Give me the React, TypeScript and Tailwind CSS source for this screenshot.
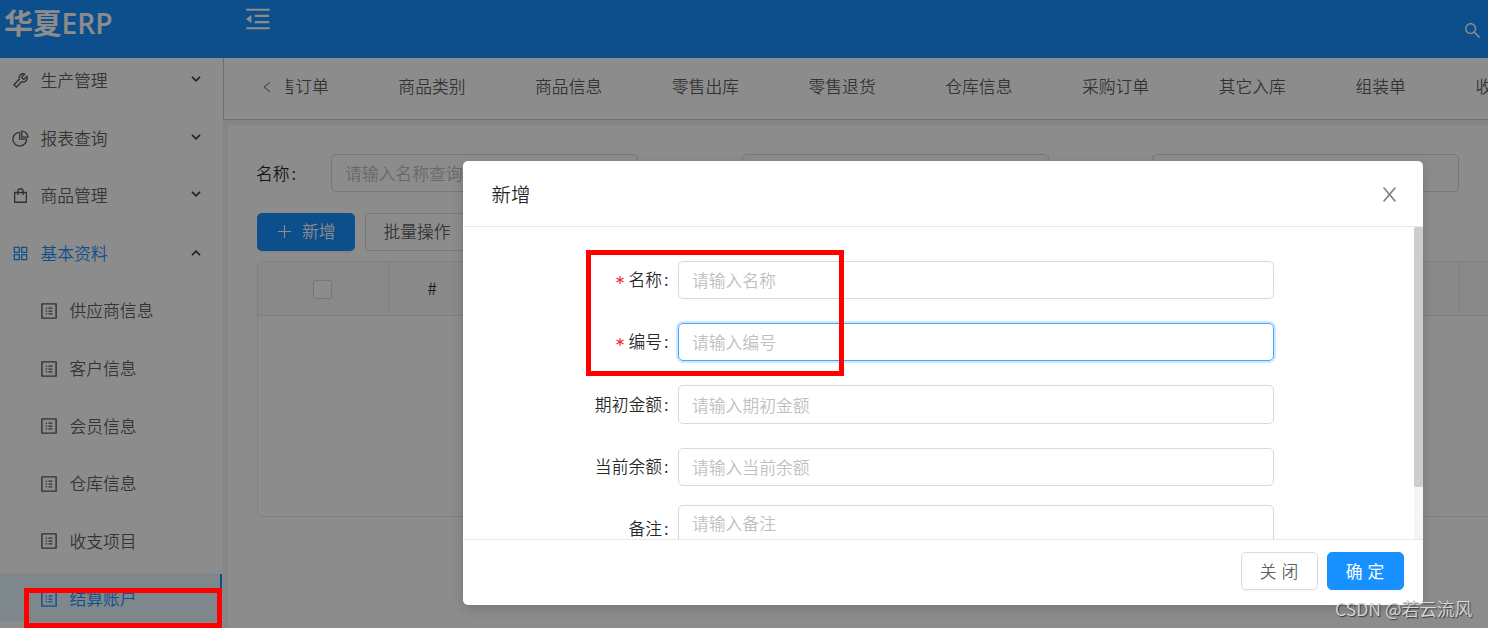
import type { ReactNode } from 'react';
import type { IconType } from 'react-icons';
import clsx from 'clsx';
import {
  AiOutlineAppstore,
  AiOutlineLeft,
  AiOutlineMenuFold,
  AiOutlinePieChart,
  AiOutlineProfile,
  AiOutlineSearch,
  AiOutlineShopping,
  AiOutlineTool,
} from 'react-icons/ai';

interface MenuGroup {
  label: string;
  icon: IconType;
  open?: boolean;
}

const menuGroups: MenuGroup[] = [
  { label: '生产管理', icon: AiOutlineTool },
  { label: '报表查询', icon: AiOutlinePieChart },
  { label: '商品管理', icon: AiOutlineShopping },
  { label: '基本资料', icon: AiOutlineAppstore, open: true },
];

const subMenu = ['供应商信息', '客户信息', '会员信息', '仓库信息', '收支项目', '结算账户'];
const activeItem = '结算账户';

const tabs = [
  '零售订单',
  '商品类别',
  '商品信息',
  '零售出库',
  '零售退货',
  '仓库信息',
  '采购订单',
  '其它入库',
  '组装单',
  '收款单',
];

const Header = () => (
  <header className="flex h-[58px] shrink-0 items-start bg-[#1890ff] text-white">
    <h1 className="w-[243px] pl-[4px] text-[28.8px] leading-[43px] font-bold">
      华夏<span className="font-['Open_Sans'] text-[28.2px] font-semibold">ERP</span>
    </h1>
    <AiOutlineMenuFold className="mt-[4px] size-[30px]" />
    <AiOutlineSearch className="mt-[21px] mr-[6px] ml-auto size-[19px]" />
  </header>
);

const Chevron = ({ up = false }: { up?: boolean }) => (
  <svg
    viewBox="0 0 10 6"
    className={clsx('h-[6px] w-[10px] fill-none stroke-black/75', up ? 'mt-[1px] rotate-180' : '-mt-[1px]')}
    strokeWidth="1.7"
  >
    <path d="M1 .8 5 4.8 9 .8" />
  </svg>
);

const CloseIcon = () => (
  <svg viewBox="64 64 896 896" className="mt-[2px] size-[19px] fill-black/50">
    <path d="M563.8 512l262.5-312.9c4.4-5.2.7-13.1-6.1-13.1h-79.8c-4.7 0-9.2 2.1-12.3 5.7L511.6 449.8 295.1 191.7c-3-3.6-7.5-5.7-12.3-5.7H203c-6.8 0-10.5 7.9-6.1 13.1L459.4 512 196.9 824.9A7.95 7.95 0 0 0 203 838h79.8c4.7 0 9.2-2.1 12.3-5.7l216.5-258.1 216.5 258.1c3 3.6 7.5 5.7 12.3 5.7h79.8c6.8 0 10.5-7.9 6.1-13.1L563.8 512z" />
  </svg>
);

const PlusIcon = () => (
  <svg viewBox="0 0 13 13" className="size-[13px] stroke-white" strokeWidth="1.1">
    <path d="M6.5 0v13M0 6.5h13" />
  </svg>
);

const Sidebar = () => (
  <aside className="w-[223px] shrink-0 overflow-hidden bg-white">
    <ul className="-mt-[2.4px] flex flex-col gap-[9.6px]">
      {menuGroups.map(({ label, icon: Icon, open }) => (
        <li
          key={label}
          className={clsx('flex h-[48px] items-center pr-[22.5px] pl-[11px]', open && 'text-[#1890ff]')}
        >
          <Icon className="mt-[2px] size-[19px]" />
          <span className="ml-[10.5px] flex-1 pt-[2px]">{label}</span>
          <Chevron up={open} />
        </li>
      ))}
      {subMenu.map((label) => (
        <li
          key={label}
          className={clsx(
            'flex h-[48px] items-center pl-[39px]',
            label === activeItem && 'mr-px border-r-2 border-[#1890ff] bg-[#e6f7ff] text-[#1890ff]'
          )}
        >
          <AiOutlineProfile className="mt-[2px] size-[20px]" />
          <span className="ml-[10.5px] pt-[2px]">{label}</span>
        </li>
      ))}
    </ul>
  </aside>
);

const TabBar = () => (
  <nav className="flex h-[62px] shrink-0 items-center border-b border-l border-[#ccc] bg-white pl-[36px]">
    <AiOutlineLeft className="-mt-[3px] size-[14px] text-black/45" />
    <div className="ml-[12px] flex-1 overflow-hidden">
      <ul className="-ml-[24.4px] flex gap-[69.6px] pb-[5px] whitespace-nowrap">
        {tabs.map((tab) => (
          <li key={tab}>{tab}</li>
        ))}
      </ul>
    </div>
  </nav>
);

const SearchInput = ({ placeholder }: { placeholder?: string }) => (
  <div className="flex h-[38px] w-[307px] items-center rounded-[5px] border border-[#d9d9d9] px-[13px] text-[#bfbfbf]">
    {placeholder}
  </div>
);

const ListPage = () => (
  <section className="mt-[5px] ml-[5px] flex-1 rounded-tl-[4px] bg-white pt-[29px] pl-[29px]">
    <div className="flex items-center gap-[103.5px]">
      <div className="flex items-center">
        <span className="-ml-px w-[75px] text-black/85">
          名称<span className="ml-[2px]">:</span>
        </span>
        <SearchInput placeholder="请输入名称查询" />
      </div>
      <SearchInput />
      <SearchInput />
    </div>
    <div className="mt-[21px] flex gap-[10px]">
      <button className="flex h-[38px] w-[98px] items-center rounded-[5px] bg-[#1890ff] pb-[1px] pl-[21px] text-white shadow-[0_2px_0_rgba(0,0,0,0.045)]">
        <PlusIcon />
        <span className="ml-[11px]">新增</span>
      </button>
      <button className="h-[38px] w-[140px] rounded-[5px] border border-[#d9d9d9] pb-[1px] pl-[17.5px] text-left">
        批量操作
      </button>
    </div>
    <div className="mt-[10px] h-[256px] rounded-tl-[5px] rounded-bl-[5px] border border-r-0 border-[#e8e8e8]">
      <div className="flex h-[54px] rounded-tl-[5px] border-b border-[#e8e8e8] bg-[#fafafa]">
        <div className="flex w-[131px] items-center justify-center border-r border-[#e8e8e8] pt-[2px] pr-[1px]">
          <span className="size-[19px] rounded-[2px] border border-[#d9d9d9] bg-white" />
        </div>
        <div className="flex w-[86px] items-center justify-center text-black/85">#</div>
        <div className="w-[985px] border-r border-[#e8e8e8]" />
      </div>
    </div>
  </section>
);

interface FieldProps {
  label: string;
  placeholder: string;
  required?: boolean;
  focused?: boolean;
  tall?: boolean;
}
const Field = ({ label, placeholder, required, focused, tall }: FieldProps) => (
  <div className={clsx('flex shrink-0', tall ? 'h-[39px]' : 'h-[38px]')}>
    <label className="flex w-[215px] items-center justify-end pr-[9.5px] pb-px text-black/85">
      {required && (
        <svg viewBox="0 0 8 8" className="mr-[4.5px] size-[8px] stroke-[#f5222d]" strokeWidth="1.1">
          <path d="M4 0v8M.5 2l7 4M7.5 2l-7 4" />
        </svg>
      )}
      {label}
      <span className="ml-[2px]">:</span>
    </label>
    <input
      placeholder={placeholder}
      className={clsx(
        'w-[596px] rounded-[5px] border px-[13px] pt-[1px] outline-none placeholder:text-[#bfbfbf]',
        focused ? 'border-[#40a9ff] shadow-[0_0_0_2px_rgba(24,144,255,0.2)]' : 'border-[#d9d9d9]'
      )}
    />
  </div>
);

const ModalButton = ({ primary, children }: { primary?: boolean; children: ReactNode }) => (
  <button
    className={clsx(
      'h-[38px] w-[77px] rounded-[5px] border pl-[4px] tracking-[5px] shadow-[0_2px_0_rgba(0,0,0,0.02)]',
      primary ? 'border-[#1890ff] bg-[#1890ff] font-normal text-white' : 'border-[#d9d9d9] bg-white'
    )}
  >
    {children}
  </button>
);

const AddModal = () => (
  <div className="absolute top-[161px] left-[463px] flex h-[444px] w-[960px] flex-col overflow-hidden rounded-[5px] bg-white shadow-[0_4px_12px_rgba(0,0,0,0.15)]">
    <div className="flex h-[66px] shrink-0 items-center justify-between border-b border-[#e8e8e8] pr-[24px] pl-[28.5px]">
      <h2 className="text-[19.4px] text-black/85">新增</h2>
      <CloseIcon />
    </div>
    <div className="flex h-[312px] shrink-0">
      <form className="flex flex-1 flex-col gap-[24px] overflow-hidden pt-[34px]">
        <Field label="名称" placeholder="请输入名称" required />
        <Field label="编号" placeholder="请输入编号" required focused />
        <Field label="期初金额" placeholder="请输入期初金额" tall />
        <Field label="当前余额" placeholder="请输入当前余额" />
        <div className="-mt-[5px] flex shrink-0 items-start">
          <label className="flex w-[215px] justify-end pt-[11px] pr-[9.5px] text-black/85">
            备注<span className="ml-[2px]">:</span>
          </label>
          <textarea
            placeholder="请输入备注"
            className="h-[60px] w-[596px] resize-none rounded-[5px] border border-[#d9d9d9] px-[13px] pt-[5px] outline-none placeholder:text-[#bfbfbf]"
          />
        </div>
      </form>
      <div className="w-[9px] bg-[#f5f5f5]">
        <div className="h-[260px] rounded-[2px] bg-[#cdcdcd]" />
      </div>
    </div>
    <div className="flex h-[66px] shrink-0 items-start justify-end gap-[9px] border-t border-[#e8e8e8] pt-[12px] pr-[19px]">
      <ModalButton>关闭</ModalButton>
      <ModalButton primary>确定</ModalButton>
    </div>
  </div>
);

const App = () => (
  <div className="relative flex h-[628px] w-[1488px] flex-col overflow-hidden bg-[#f0f2f5] font-['Noto_Sans_CJK_SC',sans-serif] text-[16.8px] leading-[25px] font-[350] text-black/65">
    <Header />
    <div className="flex min-h-0 flex-1">
      <Sidebar />
      <main className="flex min-w-0 flex-1 flex-col overflow-hidden">
        <TabBar />
        <ListPage />
      </main>
    </div>
    <div className="absolute inset-0 bg-black/45" />
    <AddModal />
    <div className="absolute top-[588px] left-[24px] h-[40px] w-[198px] border-[5px] border-[#f00]" />
    <div className="absolute top-[250px] left-[586px] h-[126px] w-[258px] border-[5px] border-[#f00]" />
    <p className="absolute top-[596px] left-[1335px] text-[17.7px] whitespace-nowrap text-[#d8d8d8] [text-shadow:1px_1px_1px_rgba(0,0,0,0.6)]">
      CSDN @若云流风
    </p>
  </div>
);

export default App;
